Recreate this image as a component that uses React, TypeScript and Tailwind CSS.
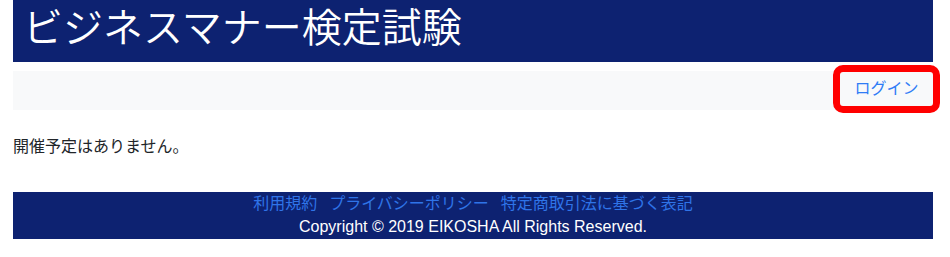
export default function App() {
  const footerLinks = ["利用規約", "プライバシーポリシー", "特定商取引法に基づく表記"]

  return (
    <div
      className="w-[920px] ml-[13px] text-[#212529] text-base"
      style={{ fontFamily: '"Liberation Sans", "Noto Sans CJK JP", sans-serif' }}
    >
      <header className="bg-[#0d2271] h-[62px] pl-[10px] flex items-center">
        <h1 className="text-white text-[40px] leading-[48px] font-[350] -mt-[6px]">
          ビジネスマナー検定試験
        </h1>
      </header>

      <nav className="bg-[#f8f9fa] mt-[9px] h-[39px] flex items-center justify-end">
        <a
          href="#"
          className="w-[93px] h-[34px] flex items-center justify-center text-[#2f7cf6] outline-[7px] outline-solid outline-[#ff0000] rounded-[3px] -mt-[4px]"
        >
          ログイン
        </a>
      </nav>

      <main className="mt-[25px] mb-[33px]">
        <p className="leading-6">開催予定はありません。</p>
      </main>

      <footer className="bg-[#0d2271] text-center h-[47px]">
        <div className="flex justify-center gap-3 leading-6">
          {footerLinks.map((label) => (
            <a key={label} href="#" className="text-[#2f74e8]">
              {label}
            </a>
          ))}
        </div>
        <p className="text-white leading-[22px]">Copyright © 2019 EIKOSHA All Rights Reserved.</p>
      </footer>
    </div>
  )
}
